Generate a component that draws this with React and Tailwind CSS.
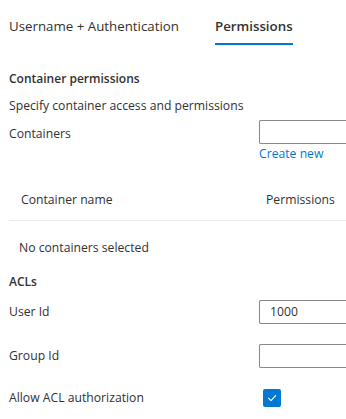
import React from 'react';

const font = { fontFamily: '"Open Sans", "Noto Sans", sans-serif' };

const Field = ({ label, value, className = '', labelClass = '' }) => (
    <div className={`flex items-center ${className}`}>
        <span className={`w-[250px] shrink-0 text-[12.2px] text-[#323130] ${labelClass}`}>{label}</span>
        <div className="h-[24px] flex-1 rounded-l-[2px] border border-r-0 border-[#8a8886] bg-white pl-[10px] text-[12.2px] leading-[22px] text-[#323130]">
            {value}
        </div>
    </div>
);

const App = () => {
    return (
        <div className="h-[419px] w-[346px] overflow-hidden bg-white pl-[9px]" style={font}>
            {/* Tabs */}
            <div className="flex pt-[16px] text-[13.3px] text-[#323130]">
                <div className="pb-[6px] leading-[20px]">Username + Authentication</div>
                <div className="ml-[36px] flex flex-col">
                    <span className="font-semibold leading-[20px]">Permissions</span>
                    <span className="mt-[7px] h-[2px] w-[78px] bg-[#0078d4]" />
                </div>
            </div>

            {/* Container permissions */}
            <div className="mt-[24px] text-[12px] font-semibold leading-[20px] text-[#323130]">Container permissions</div>
            <div className="mt-[7px] text-[12.2px] leading-[20px] text-[#323130]">Specify container access and permissions</div>

            <Field label="Containers" className="mt-[4px]" labelClass="pt-[5px]" />
            <div className="ml-[250px] mt-[2px] text-[12.2px] leading-[16px] text-[#0078d4]">Create new</div>

            {/* Table */}
            <div className="mt-[19px] flex h-[40px] items-center border-b border-[#edebe9] text-[12.2px] text-[#323130]">
                <span className="w-[257px] pl-[12px]">Container name</span>
                <span>Permissions</span>
            </div>
            <div className="mt-[17px] pl-[10px] text-[12.2px] leading-[20px] text-[#323130]">No containers selected</div>

            {/* ACLs */}
            <div className="mt-[14px] text-[12px] font-semibold leading-[20px] text-[#323130]">ACLs</div>
            <Field label="User Id" value="1000" className="mt-[8px]" />
            <Field label="Group Id" className="mt-[20px]" />

            <div className="mt-[21px] flex items-center">
                <span className="w-[254px] shrink-0 text-[12.2px] text-[#323130]">Allow ACL authorization</span>
                <span className="flex h-[18px] w-[18px] items-center justify-center rounded-[2px] bg-[#0078d4]">
                    <svg width="12" height="12" viewBox="0 0 12 12" fill="none">
                        <path d="M2.5 6.2 L5 8.6 L9.6 3.6" stroke="white" strokeWidth="1.1" strokeLinecap="round" strokeLinejoin="round" />
                    </svg>
                </span>
            </div>
        </div>
    );
};

export default App;
